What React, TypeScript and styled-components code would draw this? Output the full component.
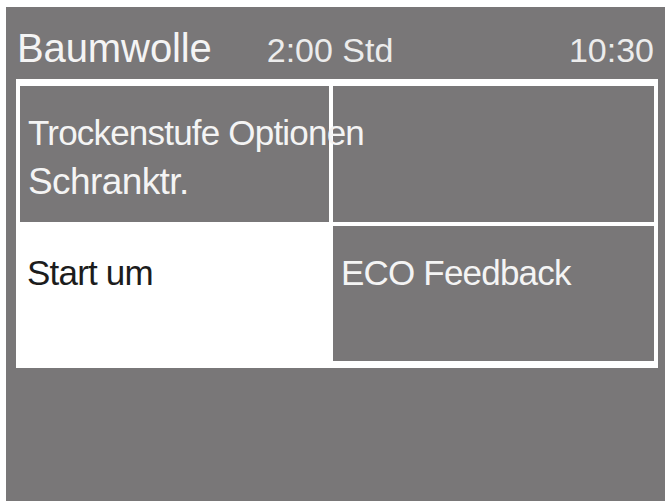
import * as React from 'react';
import styled, { createGlobalStyle } from 'styled-components';

const GlobalStyle = createGlobalStyle`
    html, body {
        margin: 0;
        padding: 0;
        background: #ffffff;
    }
    body {
        font-family: "Liberation Sans", Arial, sans-serif;
    }
`;

const Page = styled.div`
    padding: 7px 0 0 6px;
    width: 665px;
    height: 503px;
    box-sizing: border-box;
    overflow: hidden;
`;

const Screen = styled.div`
    display: flex;
    flex-direction: column;
    width: 659px;
    height: 494px;
    padding: 0 7px 0 10px;
    box-sizing: border-box;
    background: #797778;
`;

const Header = styled.div`
    display: flex;
    flex-direction: row;
    align-items: baseline;
    height: 72px;
    padding: 21px 4px 0 1px;
    box-sizing: border-box;
    color: #f4f4f4;
`;

const Program = styled.span`
    font-size: 40px;
    line-height: 40px;
    letter-spacing: -0.1px;
`;

const Duration = styled.span`
    margin-left: 55px;
    font-size: 34px;
    line-height: 34px;
    color: #ececec;
`;

const Clock = styled.span`
    margin-left: auto;
    font-size: 34px;
    line-height: 34px;
    color: #ececec;
`;

const Menu = styled.div`
    display: grid;
    grid-template-columns: 309px 1fr;
    grid-template-rows: 136px 135px;
    gap: 4px;
    padding: 7px 4px;
    background: #ffffff;
`;

// the selected entry is white and runs into the white frame around it
const Cell = styled.div<{ $selected?: boolean }>`
    display: flex;
    flex-direction: column;
    min-width: 0;
    background: ${p => p.$selected ? '#ffffff' : '#797778'};
    color: ${p => p.$selected ? '#1c1c1c' : '#f4f4f4'};
    margin: ${p => p.$selected ? '-4px 0 -7px -4px' : '0'};
    padding: ${p => p.$selected ? '31px 8px 0 11px' : '27px 8px 0 8px'};
`;

const Label = styled.span`
    position: relative;
    z-index: 1;
    font-size: 35px;
    line-height: 40px;
    letter-spacing: -0.8px;
    white-space: nowrap;
`;

const Value = styled.span`
    margin-top: 8px;
    font-size: 37px;
    line-height: 42px;
    letter-spacing: -0.6px;
    white-space: nowrap;
`;

type MenuItem = { label: string, value?: string, selected?: boolean };

const items: MenuItem[] = [
    { label: 'Trockenstufe Optionen', value: 'Schranktr.' },
    { label: '' },
    { label: 'Start um', selected: true },
    { label: 'ECO Feedback' },
];

const App: React.FC = () => {
    return (
        <>
            <GlobalStyle/>
            <Page>
                <Screen>
                    <Header>
                        <Program>Baumwolle</Program>
                        <Duration>2:00 Std</Duration>
                        <Clock>10:30</Clock>
                    </Header>
                    <Menu>
                        {items.map((item, i) => (
                            <Cell key={i} $selected={item.selected}>
                                {item.label ? <Label>{item.label}</Label> : null}
                                {item.value ? <Value>{item.value}</Value> : null}
                            </Cell>
                        ))}
                    </Menu>
                </Screen>
            </Page>
        </>
    );
};

export default App;
